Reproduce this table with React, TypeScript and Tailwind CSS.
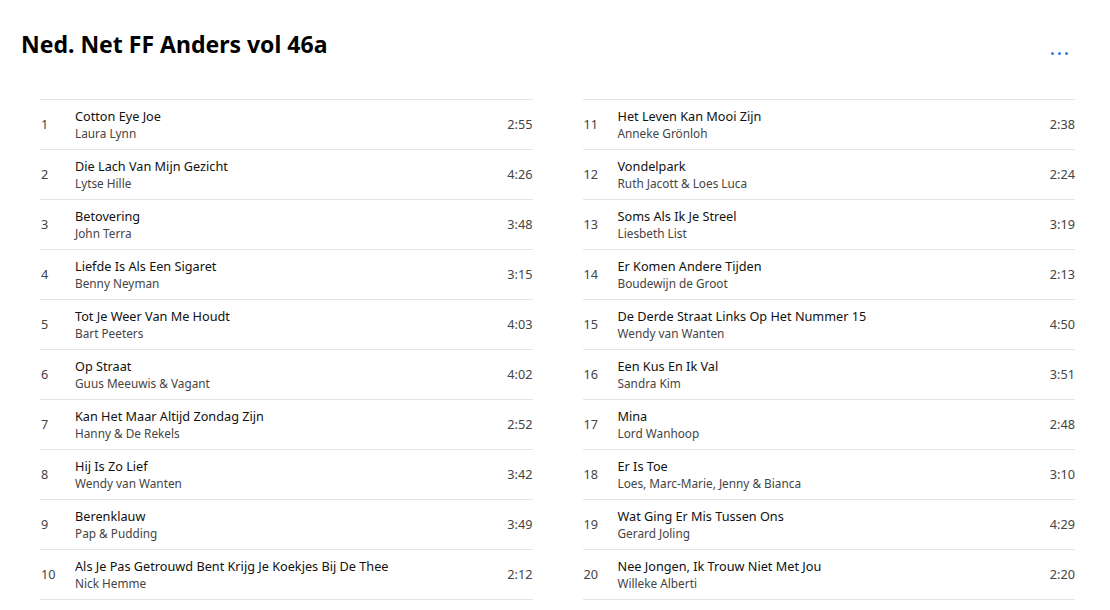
import React from 'react';

type Track = { no: number; title: string; artist: string; time: string };

const TRACKS: Track[] = [
    { no: 1, title: "Cotton Eye Joe", artist: "Laura Lynn", time: "2:55" },
    { no: 2, title: "Die Lach Van Mijn Gezicht", artist: "Lytse Hille", time: "4:26" },
    { no: 3, title: "Betovering", artist: "John Terra", time: "3:48" },
    { no: 4, title: "Liefde Is Als Een Sigaret", artist: "Benny Neyman", time: "3:15" },
    { no: 5, title: "Tot Je Weer Van Me Houdt", artist: "Bart Peeters", time: "4:03" },
    { no: 6, title: "Op Straat", artist: "Guus Meeuwis & Vagant", time: "4:02" },
    { no: 7, title: "Kan Het Maar Altijd Zondag Zijn", artist: "Hanny & De Rekels", time: "2:52" },
    { no: 8, title: "Hij Is Zo Lief", artist: "Wendy van Wanten", time: "3:42" },
    { no: 9, title: "Berenklauw", artist: "Pap & Pudding", time: "3:49" },
    { no: 10, title: "Als Je Pas Getrouwd Bent Krijg Je Koekjes Bij De Thee", artist: "Nick Hemme", time: "2:12" },
    { no: 11, title: "Het Leven Kan Mooi Zijn", artist: "Anneke Grönloh", time: "2:38" },
    { no: 12, title: "Vondelpark", artist: "Ruth Jacott & Loes Luca", time: "2:24" },
    { no: 13, title: "Soms Als Ik Je Streel", artist: "Liesbeth List", time: "3:19" },
    { no: 14, title: "Er Komen Andere Tijden", artist: "Boudewijn de Groot", time: "2:13" },
    { no: 15, title: "De Derde Straat Links Op Het Nummer 15", artist: "Wendy van Wanten", time: "4:50" },
    { no: 16, title: "Een Kus En Ik Val", artist: "Sandra Kim", time: "3:51" },
    { no: 17, title: "Mina", artist: "Lord Wanhoop", time: "2:48" },
    { no: 18, title: "Er Is Toe", artist: "Loes, Marc-Marie, Jenny & Bianca", time: "3:10" },
    { no: 19, title: "Wat Ging Er Mis Tussen Ons", artist: "Gerard Joling", time: "4:29" },
    { no: 20, title: "Nee Jongen, Ik Trouw Niet Met Jou", artist: "Willeke Alberti", time: "2:20" },
];

const TrackRow: React.FC<{ track: Track }> = ({ track }) => (
    <div className="flex items-center h-[50px] border-b border-[#e5e5e5]">
        <span className="w-[35px] pl-[1px] text-[12.7px] text-[#444]">{track.no}</span>
        <div className="flex-1 min-w-0 flex flex-col">
            <span className="text-[12.7px] leading-[17px] text-[#111]">{track.title}</span>
            <span className="text-[11.8px] leading-[17px] text-[#444]">{track.artist}</span>
        </div>
        <span className="text-[12.7px] text-[#444]">{track.time}</span>
    </div>
);

const App: React.FC = () => {
    const left = TRACKS.slice(0, 10);
    const right = TRACKS.slice(10);

    return (
        <div className="w-[1110px] h-[610px] bg-white overflow-hidden font-['Noto_Sans',sans-serif]">
            <div className="flex items-start justify-between pl-[21px] pr-[42px] pt-[28px]">
                <h1 className="text-[23px] leading-[32px] font-bold text-black">Ned. Net FF Anders vol 46a</h1>
                <div className="flex gap-[4px] mt-[24px]">
                    <span className="w-[3px] h-[3px] rounded-full bg-[#2b7de1]" />
                    <span className="w-[3px] h-[3px] rounded-full bg-[#2b7de1]" />
                    <span className="w-[3px] h-[3px] rounded-full bg-[#2b7de1]" />
                </div>
            </div>

            <div className="grid grid-cols-2 gap-[50px] pl-[40px] pr-[35px] mt-[39px]">
                <div className="border-t border-[#e5e5e5]">
                    {left.map(t => <TrackRow key={t.no} track={t} />)}
                </div>
                <div className="border-t border-[#e5e5e5]">
                    {right.map(t => <TrackRow key={t.no} track={t} />)}
                </div>
            </div>
        </div>
    );
};

export default App;
